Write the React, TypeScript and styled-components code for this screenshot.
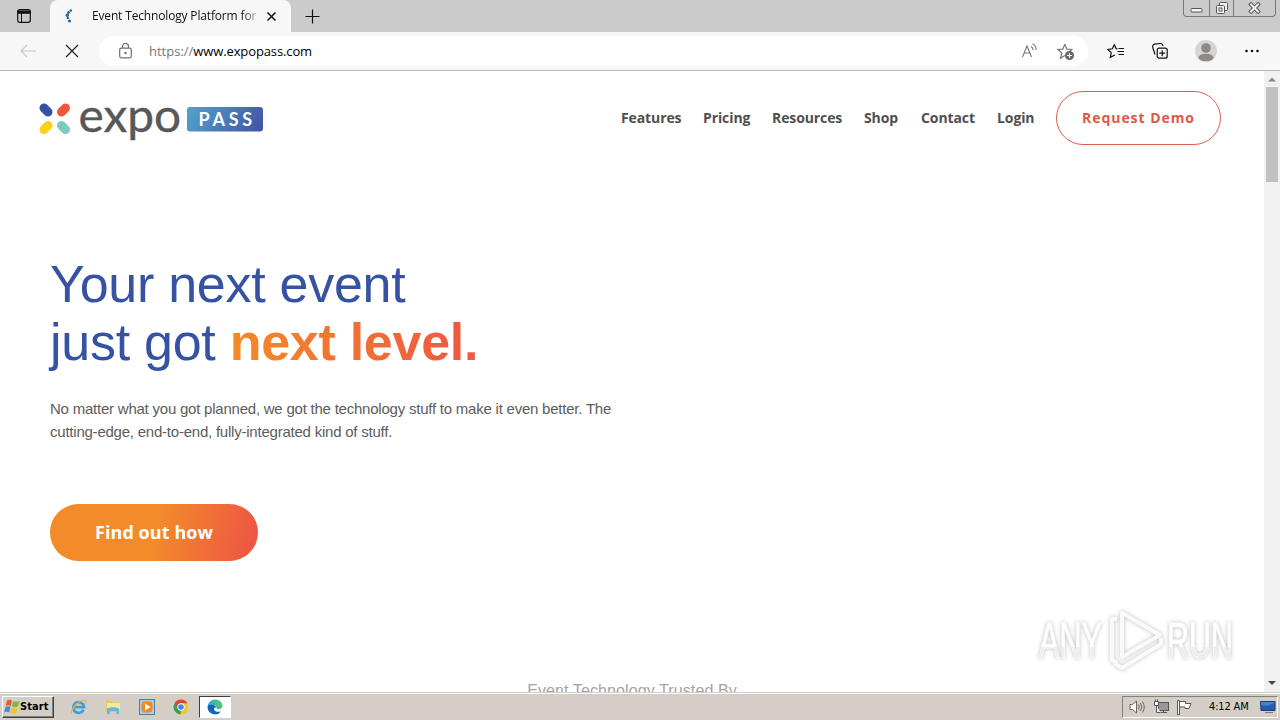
import * as React from 'react'
import styled, { createGlobalStyle } from 'styled-components'

const GlobalStyle = createGlobalStyle`
  * {
    box-sizing: border-box;
  }

  body {
    margin: 0;
    overflow: hidden;
    background: #fff;
  }

  svg {
    display: block;
    flex: none;
  }
`

const Screen = styled('div')`
  width: 1280px;
  height: 720px;
  display: flex;
  flex-direction: column;
  position: relative;
  overflow: hidden;
  font-family: 'Open Sans', 'Noto Sans', sans-serif;
`

/* browser chrome */

const TabStrip = styled('div')`
  height: 32px;
  flex: none;
  display: flex;
  align-items: center;
  background: #cbcbcb;
`

const TabActions = styled('div')`
  width: 50px;
  padding-left: 16px;
`

const Tab = styled('div')`
  width: 241px;
  height: 32px;
  display: flex;
  align-items: center;
  padding: 0 14px 0 12px;
  background: #f7f7f7;
  border-radius: 8px 8px 0 0;
`

const TabTitle = styled('div')`
  width: 166px;
  margin-left: 16px;
  margin-right: 9px;
  overflow: hidden;
  white-space: nowrap;
  font-size: 12px;
  line-height: 18px;
  letter-spacing: -0.16px;
  color: #111;
  mask-image: linear-gradient(to right, #000 150px, transparent 170px);
`

const NewTab = styled('div')`
  margin-left: 14px;
`

const WindowButtons = styled('div')`
  align-self: flex-start;
  display: flex;
  width: 93px;
  height: 17px;
  margin-left: auto;
  margin-right: 4px;
  border: 1px solid #777;
  border-top: 0;
  border-radius: 0 0 4px 4px;
`

const WindowButton = styled('div')<{ $width: number }>`
  width: ${props => props.$width}px;
  display: flex;
  align-items: center;
  justify-content: center;

  & + & {
    border-left: 1px solid #777;
  }
`

const Toolbar = styled('div')`
  height: 39px;
  flex: none;
  display: flex;
  align-items: center;
  padding: 0 20px;
  background: #f7f7f7;
  border-bottom: 1px solid #b9b9b9;
`

const NavButtons = styled('div')`
  width: 79px;
  display: flex;
  gap: 28px;
`

const AddressBar = styled('div')`
  width: 989px;
  height: 30px;
  display: flex;
  align-items: center;
  padding: 0 12px 0 19px;
  background: #fff;
  border-radius: 15px;
`

const Url = styled('div')`
  flex: 1;
  margin-left: 16px;
  font-size: 13px;
  line-height: 20px;
  letter-spacing: -0.12px;
  color: #000;

  span {
    color: #777;
    letter-spacing: 0;
  }
`

const AddressIcons = styled('div')`
  display: flex;
  align-items: center;
  gap: 17px;
`

const ToolbarIcons = styled('div')`
  flex: 1;
  display: flex;
  align-items: center;
  justify-content: space-between;
  padding-left: 19px;
`

/* page */

const Viewport = styled('div')`
  height: 621px;
  flex: none;
  display: flex;
`

const Page = styled('main')`
  flex: 1;
  height: 621px;
  overflow: hidden;
  background: #fff;
`

const SiteHeader = styled('header')`
  height: 94px;
  display: flex;
  align-items: center;
  justify-content: space-between;
  padding: 0 43px 0 36px;
`

const SiteNav = styled('nav')`
  display: flex;
  align-items: center;
`

const NavLink = styled('a')<{ $width: number }>`
  width: ${props => props.$width}px;
  font-size: 14px;
  line-height: 20px;
  font-weight: 700;
  letter-spacing: -0.1px;
  color: #4f4f4f;
  white-space: nowrap;
`

const DemoButton = styled('a')`
  width: 165px;
  height: 54px;
  display: flex;
  align-items: center;
  justify-content: center;
  padding-bottom: 2px;
  border: 1px solid #dd5f4c;
  border-radius: 27px;
  font-size: 14px;
  font-weight: 700;
  letter-spacing: 0.95px;
  color: #dd5945;
`

const Hero = styled('section')`
  height: 517px;
  padding: 90px 0 0 50px;
`

const Title = styled('h1')`
  margin: 0;
  font-family: 'Liberation Sans', Arial, sans-serif;
  font-size: 52px;
  line-height: 58px;
  font-weight: 400;
  letter-spacing: -0.27px;
  color: #3653a3;
  white-space: nowrap;

  strong {
    font-weight: 700;
    color: transparent;
    background: linear-gradient(to right, #f58a25, #ee5644);
    background-clip: text;
  }
`

const Lead = styled('p')`
  width: 580px;
  margin: 26px 0 0;
  font-family: 'Liberation Sans', Arial, sans-serif;
  font-size: 15px;
  line-height: 23px;
  letter-spacing: -0.225px;
  color: #5c5c5c;
  white-space: nowrap;
`

const CtaButton = styled('a')`
  width: 208px;
  height: 57px;
  margin-top: 61px;
  display: flex;
  align-items: center;
  justify-content: center;
  padding-bottom: 2px;
  border-radius: 29px;
  background: linear-gradient(105deg, #f38b2a 50%, #ee5743 95%);
  font-size: 18px;
  font-weight: 700;
  letter-spacing: 0.08px;
  color: #fff;
`

const Trusted = styled('div')`
  text-align: center;
  font-family: 'Liberation Sans', Arial, sans-serif;
  font-size: 16px;
  line-height: 18px;
  letter-spacing: 0.1px;
  color: #a3a3a3;
`

const Scrollbar = styled('div')`
  width: 16px;
  display: flex;
  flex-direction: column;
  align-items: center;
  background: #f1f1f1;
`

const ScrollThumb = styled('div')`
  width: 12px;
  height: 95px;
  margin-bottom: auto;
  background: #c1c1c1;
`

const Watermark = styled('div')`
  position: absolute;
  left: 1030px;
  top: 602px;
`

/* taskbar */

const Taskbar = styled('footer')`
  height: 28px;
  flex: none;
  display: flex;
  align-items: center;
  background: #d5cec6;
  border-top: 1px solid #d5cec6;
  box-shadow: inset 0 1px 0 #fff;
`

const StartButton = styled('div')`
  width: 52px;
  height: 22px;
  margin-left: 2px;
  display: flex;
  align-items: center;
  padding-left: 1px;
  border: 1px solid;
  border-color: #fff #404040 #404040 #fff;
  box-shadow: inset -1px -1px 0 #808080;
  font-family: 'DejaVu Sans', sans-serif;
  font-stretch: condensed;
  font-size: 11px;
  font-weight: 700;
  letter-spacing: 0.1px;
  color: #000;
`

const QuickLaunch = styled('div')`
  display: flex;
  align-items: center;
  gap: 18px;
  margin-left: 16px;
`

const ActiveTask = styled('div')`
  width: 32px;
  height: 22px;
  margin-left: 10px;
  display: flex;
  align-items: center;
  justify-content: center;
  background: #fff;
  border: 1px solid;
  border-color: #404040 #fff #fff #404040;
`

const Tray = styled('div')`
  width: 156px;
  height: 22px;
  margin-left: auto;
  margin-right: 2px;
  display: flex;
  align-items: center;
  padding-left: 6px;
  border: 1px solid;
  border-color: #808080 #fff #fff #808080;
`

const TrayIcons = styled('div')`
  display: flex;
  gap: 7px;
`

const Clock = styled('div')`
  width: 42px;
  margin: 0 9px 0 16px;
  font-family: 'DejaVu Sans', sans-serif;
  font-stretch: condensed;
  font-size: 11px;
  letter-spacing: -0.15px;
  white-space: nowrap;
  color: #000;
`

interface NavItem {
  label: string,
  width: number
}

const navItems: NavItem[] = [
  { label: 'Features', width: 82 },
  { label: 'Pricing', width: 69 },
  { label: 'Resources', width: 92 },
  { label: 'Shop', width: 57 },
  { label: 'Contact', width: 76 },
  { label: 'Login', width: 59 }
]

const starPath = 'M7 1.2 L8.8 5.5 L13.2 5.8 L9.9 8.8 M7 1.2 L5.2 5.5 L.8 5.8 L4.2 8.8 L3.2 13.6 L7 11.2'

const Logo = () => (
  <svg width="230" height="70" viewBox="0 -12 230 70">
    <g strokeWidth="9" strokeLinecap="round">
      <path d="M8 13 l4 4" stroke="#3553a4" />
      <path d="M29.5 13 l-4 4" stroke="#f1573f" />
      <path d="M12 30.5 l-4 4" stroke="#fcd016" />
      <path d="M25.5 30.5 l4 4" stroke="#7ccbbf" />
    </g>
    <text x="42.500" y="36.500" fontFamily="Lato, sans-serif" fontSize="46" fill="#58585a" stroke="#58585a" strokeWidth="0.400" textLength="102.500" lengthAdjust="spacingAndGlyphs">expo</text>
    <defs>
      <linearGradient id="pass" x1="0" x2="1" y1="0.4" y2="0.6">
        <stop offset="0" stopColor="#4f9fca" />
        <stop offset="1" stopColor="#4258a6" />
      </linearGradient>
    </defs>
    <rect x="151" y="12" width="76" height="24.500" rx="3" fill="url(#pass)" />
    <text x="162.500" y="31" fontFamily="Lato, sans-serif" fontSize="18" fontWeight="700" fill="#fff" letterSpacing="3.700">PASS</text>
  </svg>
)

const AnyRunMark = () => (
  <svg width="210" height="78" viewBox="0 0 210 78" style={{ filter: 'drop-shadow(0 0 2px rgba(0,0,0,.26))' }}>
    <defs>
      <linearGradient id="mark" x1="0" x2="0" y1="0" y2="1">
        <stop offset="0.6" stopColor="#fff" />
        <stop offset="0.6" stopColor="#ececec" />
      </linearGradient>
    </defs>
    <g fill="url(#mark)" stroke="#fafafa" fontFamily="'Liberation Sans', sans-serif" fontSize="50" fontWeight="400">
      <text x="9" y="56" textLength="63" lengthAdjust="spacingAndGlyphs">ANY</text>
      <text x="137" y="56" textLength="66" lengthAdjust="spacingAndGlyphs">RUN</text>
    </g>
    <g fill="none" stroke="#fafafa" strokeWidth="4" strokeLinejoin="round">
      <path d="M92 11 L130 33 L92 55 Z" />
      <path d="M87 17 H82 V58 L87 61" />
      <path d="M84 61 L92 66 L131 42 V36" />
    </g>
  </svg>
)

const PlusTab = () => (
  <svg width="15" height="15" viewBox="0 0 15 15" stroke="#111" strokeWidth="1.200">
    <path d="M7.500 .5v14M.5 7.500h14" />
  </svg>
)

const App = () => (
  <Screen>
    <GlobalStyle />
    <TabStrip>
      <TabActions>
        <svg width="16" height="16" viewBox="0 0 16 16">
          <rect x="1.700" y="1.700" width="12.600" height="12.600" rx="2" fill="none" stroke="#111" strokeWidth="1.200" />
          <path d="M1.500 2.500h13v3.300h-13z" fill="#111" />
          <path d="M5.500 5v9" stroke="#111" />
        </svg>
      </TabActions>
      <Tab>
        <svg width="14" height="16" viewBox="0 0 14 16" fill="#2c649b">
          <circle cx="8.800" cy="2.500" r="1.300" />
          <circle cx="6.500" cy="4.500" r="1.500" />
          <circle cx="5.300" cy="7.300" r="1.700" />
          <circle cx="5.800" cy="10" r="1.200" />
          <circle cx="7.500" cy="13" r="1.600" />
        </svg>
        <TabTitle>Event Technology Platform for In</TabTitle>
        <svg width="9" height="9" viewBox="0 0 9 9" stroke="#111" strokeWidth="1.500">
          <path d="M.5 .5l8 8M8.500 .5l-8 8" />
        </svg>
      </Tab>
      <NewTab><PlusTab /></NewTab>
      <WindowButtons>
        <WindowButton $width={25}>
          <svg width="13" height="16" viewBox="0 0 13 16">
            <rect x="1" y="8.500" width="11" height="3.500" rx="1" fill="#f5f5f5" stroke="#555" />
          </svg>
        </WindowButton>
        <WindowButton $width={25}>
          <svg width="14" height="15" viewBox="0 0 14 15" fill="#f5f5f5" stroke="#555">
            <rect x="4.500" y="1.500" width="8" height="8" rx="1" />
            <rect x="1.500" y="4.500" width="8" height="8" rx="1" />
            <rect x="4" y="7" width="3" height="3" />
          </svg>
        </WindowButton>
        <WindowButton $width={42}>
          <svg width="13" height="12" viewBox="0 0 13 12">
            <path d="M3 2.500l7 7M10 2.500l-7 7" stroke="#555" strokeWidth="4" strokeLinecap="square" />
            <path d="M3 2.500l7 7M10 2.500l-7 7" stroke="#f5f5f5" strokeWidth="2" strokeLinecap="square" />
          </svg>
        </WindowButton>
      </WindowButtons>
    </TabStrip>
    <Toolbar>
      <NavButtons>
        <svg width="17" height="14" viewBox="0 0 17 14" fill="none" stroke="#c8c8c8" strokeWidth="1.200">
          <path d="M16 7H1M7 1L1 7l6 6" />
        </svg>
        <svg width="14" height="14" viewBox="0 0 14 14" stroke="#222" strokeWidth="1.200">
          <path d="M1 1l12 12M13 1L1 13" />
        </svg>
      </NavButtons>
      <AddressBar>
        <svg width="15" height="17" viewBox="0 0 15 17" fill="none" stroke="#707070" strokeWidth="1.200">
          <rect x="1.700" y="5.200" width="11.600" height="9.600" rx="1.500" />
          <path d="M4.500 5V3.500a3 3 0 0 1 6 0V5" />
          <circle cx="7.500" cy="10" r=".6" fill="#707070" />
        </svg>
        <Url><span>https://</span>www.expopass.com</Url>
        <AddressIcons>
          <svg width="18" height="16" viewBox="0 0 18 16" fill="none" stroke="#777" strokeWidth="1.100">
            <path d="M1.500 14L6 3l4.500 11M3.200 10h5.600M10 3.500c1.300.7 2 2 2 3.500M11.500 .8c2.500 1.200 3.700 3.500 3.600 6.300" />
          </svg>
          <svg width="20" height="19" viewBox="0 0 20 19" fill="none" stroke="#777" strokeWidth="1.100">
            <path transform="translate(1 1) scale(1.120)" d={starPath} />
            <circle cx="13.500" cy="13.500" r="4.500" fill="#666" stroke="none" />
            <path d="M13.500 11v5M11 13.500h5" stroke="#fff" />
          </svg>
        </AddressIcons>
      </AddressBar>
      <ToolbarIcons>
        <svg width="18" height="17" viewBox="0 0 18 17" fill="none" stroke="#111" strokeWidth="1.200">
          <path transform="translate(0 1)" d="M10.500 4.800L9.300 4.800 7.300 .8 5.300 4.800 .8 5.400 4.200 8.600 3.300 13.400 8 11" />
          <path d="M11.500 5.500h5.500M10.500 8.500h6.500M11.500 11.500h5.500" />
        </svg>
        <svg width="18" height="18" viewBox="0 0 18 18" fill="none" stroke="#111" strokeWidth="1.200">
          <rect x="6.200" y="6.200" width="10" height="10" rx="2" />
          <path d="M11.200 8.200v6M8.200 11.200h6M4 12.500L2 6.200Q.8 3 3.500 2.200L9.300 1.500Q11.500 1.300 12 4" />
        </svg>
        <svg width="24" height="24" viewBox="0 0 24 24">
          <circle cx="12" cy="12" r="11" fill="#d7d5d3" />
          <circle cx="12" cy="9" r="4.800" fill="#8e8984" />
          <ellipse cx="12" cy="18.500" rx="7.500" ry="3.800" fill="#8e8984" />
        </svg>
        <svg width="16" height="4" viewBox="0 0 16 4" fill="#111">
          <circle cx="2.500" cy="2" r="1.300" />
          <circle cx="8" cy="2" r="1.300" />
          <circle cx="13.500" cy="2" r="1.300" />
        </svg>
      </ToolbarIcons>
    </Toolbar>

    <Viewport>
      <Page>
        <SiteHeader>
          <Logo />
          <SiteNav>
            {navItems.map(item => (
              <NavLink key={item.label} $width={item.width}>{item.label}</NavLink>
            ))}
            <DemoButton>Request Demo</DemoButton>
          </SiteNav>
        </SiteHeader>
        <Hero>
          <Title>
            Your next event<br />
            just got <strong>next level.</strong>
          </Title>
          <Lead>
            No matter what you got planned, we got the technology stuff to make it even better. The<br />
            cutting-edge, end-to-end, fully-integrated kind of stuff.
          </Lead>
          <CtaButton>Find out how</CtaButton>
        </Hero>
        <Trusted>Event Technology Trusted By</Trusted>
      </Page>
      <Scrollbar>
        <svg width="16" height="16" viewBox="0 0 16 16"><path d="M4 10.500l4-4 4 4z" fill="#888" /></svg>
        <ScrollThumb />
        <svg width="16" height="17" viewBox="0 0 16 17"><path d="M4 6l4 4 4-4z" fill="#444" /></svg>
      </Scrollbar>
    </Viewport>

    <Taskbar>
      <StartButton>
        <svg width="16" height="16" viewBox="0 0 16 16">
          <path d="M3 1.500q2.500-1.500 5 0L6.800 7q-2.500-1.400-5 0z" fill="#ea5b27" />
          <path d="M9 2q2.800 1.500 6.500-.2L14 7.600q-3 1.500-6 0z" fill="#7cba3a" />
          <path d="M1.500 8q2.500-1.400 5 0L5.200 13.500q-2.400-1.300-5 0z" fill="#3b8fd9" />
          <path d="M7.700 8.700q2.800 1.400 6 0L12.300 14.200q-2.800 1.400-6 0z" fill="#f8c22d" />
        </svg>
        Start
      </StartButton>
      <QuickLaunch>
        <svg width="17" height="16" viewBox="0 0 17 16" fill="none">
          <path d="M13.500 10.800a5.400 5.400 0 1 1 .5-2.600H4.500" stroke="#3d9fdd" strokeWidth="2.800" />
          <path d="M2 14.500C-1 12.500 9-.5 15.300 1.500q1.300.8-.5 3.500" stroke="#e4b83c" strokeWidth="1.200" />
        </svg>
        <svg width="16" height="16" viewBox="0 0 16 16">
          <path d="M1 1.500h5l1 1.500h7v10H1z" fill="#e9c55e" />
          <path d="M2 4h13v6H2z" fill="#f8e7a0" />
          <path d="M2 9.500q6-2.500 12 0v5.500h-2.500v-3h-7v3H2z" fill="#65b5dc" />
        </svg>
        <svg width="16" height="16" viewBox="0 0 16 16">
          <rect x=".5" y=".5" width="15" height="15" fill="#a9cbea" stroke="#4782b7" />
          <rect x="2.500" y="2.500" width="11" height="11" rx="3" fill="#f38a1d" />
          <path d="M6 4.500v7l5.500-3.500z" fill="#fff" />
        </svg>
        <svg width="16" height="16" viewBox="0 0 16 16">
          <circle cx="8" cy="8" r="7.500" fill="#f6c526" />
          <path d="M1.500 4.300A7.500 7.500 0 0 1 14.500 4.300H8L4.800 10z" fill="#dd4436" />
          <path d="M1.500 4.300L4.800 10 8 11.500l-.5 4A7.500 7.500 0 0 1 1.500 4.300z" fill="#30a153" />
          <circle cx="8" cy="8" r="3.700" fill="#fff" />
          <circle cx="8" cy="8" r="2.800" fill="#4286ee" />
        </svg>
      </QuickLaunch>
      <ActiveTask>
        <svg width="16" height="16" viewBox="0 0 16 16">
          <defs>
            <linearGradient id="edge" x1="0" x2="1" y1="0.2" y2="0">
              <stop offset="0" stopColor="#2aa7dd" />
              <stop offset="1" stopColor="#5fd05c" />
            </linearGradient>
          </defs>
          <path d="M.5 8A7.500 7.500 0 0 1 8 .5c4.500 0 7.500 3 7.500 6.300 0 2.200-1.800 3.400-3.700 3.400-1.500 0-2.300-.7-2.300-1.200 0-2-1.500-3.300-4-3.300C3 5.700 1 7 .5 8z" fill="url(#edge)" />
          <path d="M.5 8c.8-2 3-2.700 5.500-2.300 1.500.3 3 1.500 3.500 3-2-.5-3 1-2 2.500 1.300 1.800 4 2 6.500 1.300A7.500 7.500 0 0 1 .5 8z" fill="#1464bb" />
        </svg>
      </ActiveTask>
      <Tray>
        <TrayIcons>
          <svg width="17" height="16" viewBox="0 0 17 16" fill="#fff" stroke="#666">
            <path d="M1 5.500h2.500L7.500 2v12L3.500 10.500H1z" />
            <path d="M9.500 5.500q1.500 2.500 0 5M11.500 4q2.500 4 0 8M13.500 2.500q3.500 5.500 0 11" fill="none" />
          </svg>
          <svg width="16" height="16" viewBox="0 0 16 16" stroke="#555">
            <rect x="5.500" y="3.500" width="10" height="8" fill="#999" />
            <path d="M8 13.500h6M10.500 12v1.500" />
            <path d="M1.500 2.500h4v4h-4zM2.500 .5v2M4.500 .5v2M3.500 6.500v7h4" fill="#fff" />
          </svg>
          <svg width="17" height="16" viewBox="0 0 17 16" fill="#fff" stroke="#555">
            <path d="M1.500 1.500h2v14h-2zM3.500 2.500h6v2h5.500l-2 5h-4v-1.500h-5.500z" />
          </svg>
        </TrayIcons>
        <Clock>4:12 AM</Clock>
        <svg width="16" height="14" viewBox="0 0 16 14">
          <path d="M.5 1.500h14.500v9H1z" fill="#235eb5" stroke="#1d3d72" />
          <path d="M1 5q7 2 13.500-2.500V2H1z" fill="#4385d4" />
          <path d="M5 12.500h8" stroke="#777" />
        </svg>
      </Tray>
    </Taskbar>
    <Watermark><AnyRunMark /></Watermark>
  </Screen>
)

export default App
